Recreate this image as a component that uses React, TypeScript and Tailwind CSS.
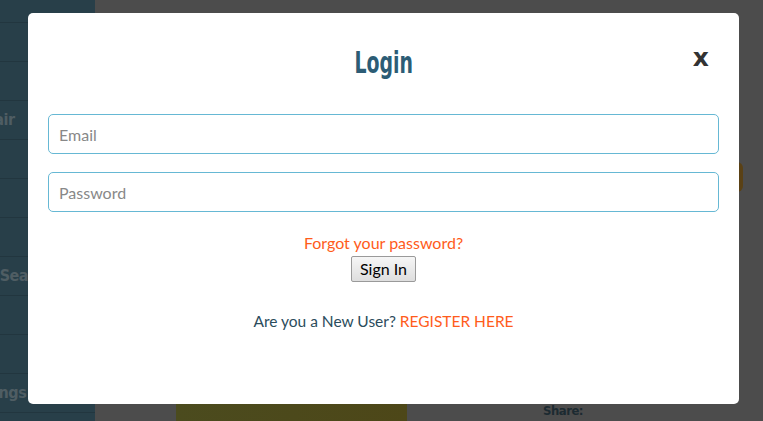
import React from 'react';

const sideItems = [
  { label: '', cls: '' },
  { label: 'Stair', cls: '-ml-[22px]' },
  { label: '', cls: '' },
  { label: '', cls: '' },
  { label: '', cls: '' },
  { label: 'Floor Seat', cls: '-ml-[44px]' },
  { label: '', cls: '' },
  { label: '', cls: '' },
  { label: 'Ratings', cls: '-ml-[32px]' },
  { label: '', cls: '' },
];

export default function App() {
  return (
    <div className="relative h-[421px] w-[763px] overflow-hidden bg-[#4c4c4c] font-['Lato',sans-serif]">
      {/* page behind the overlay */}
      <div className="flex h-full">
        <div className="flex w-[95px] flex-col bg-[#22363f]">
          <div className="h-[22px] shrink-0 bg-[#283f49]" />
          <div className="mt-px h-[38px] shrink-0 bg-[#283f49]" />
          {sideItems.map((item, i) => (
            <div
              key={i}
              className="mt-px flex h-[38px] shrink-0 items-center overflow-visible whitespace-nowrap bg-[#283f49] font-['DejaVu_Sans_Condensed',sans-serif] text-[16px] font-bold tracking-[-0.5px] text-[#4f5d63]"
            >
              <span className={item.cls}>{item.label}</span>
            </div>
          ))}
        </div>
        <div className="relative flex-1">
          <div className="absolute right-[20px] top-[162px] h-[30px] w-[40px] rounded-r-[6px] bg-[#5a4115]" />
          <div className="absolute left-[81px] top-[403px] h-[30px] w-[231px] bg-gradient-to-r from-[#4b4b1e] to-[#4d4718]" />
          <div className="absolute left-[448px] top-[401px] font-['DejaVu_Sans_Condensed',sans-serif] text-[13px] font-bold tracking-[-0.5px] text-[#1c2a31]">
            Share:
          </div>
        </div>
      </div>

      {/* modal */}
      <div className="absolute inset-0 flex items-start justify-start pl-[28px] pt-[13px]">
        <div className="relative h-[391px] w-[711px] rounded-[5px] bg-white px-[20px]">
          <button className="absolute right-[30px] top-[32px] font-['DejaVu_Sans',sans-serif] text-[25px] font-bold leading-none text-[#333]">
            x
          </button>
          <h2 className="pt-[31px] text-center font-['DejaVu_Sans_Condensed',sans-serif] text-[30px] font-bold leading-[38px] text-[#2c5c75]">
            <span className="inline-block scale-x-[0.7]">Login</span>
          </h2>
          <div className="mt-[32px] flex flex-col gap-[18px]">
            <input
              placeholder="Email"
              className="h-[40px] w-full rounded-[5px] border border-[#66b8d4] px-[10px] text-[16px] text-[#333] outline-none placeholder:text-[#888]"
            />
            <input
              type="password"
              placeholder="Password"
              className="h-[40px] w-full rounded-[5px] border border-[#66b8d4] px-[10px] text-[16px] text-[#333] outline-none placeholder:text-[#888]"
            />
          </div>
          <div className="mt-[20px] flex flex-col items-center">
            <a className="text-[16px] leading-[22px] text-[#ff5c1b]">Forgot your password?</a>
            <button className="mt-[2px] h-[26px] rounded-[2px] border border-[#9a9a9a] bg-gradient-to-b from-[#f6f6f6] to-[#dedede] px-[8px] text-[16px] leading-none text-black">
              Sign In
            </button>
            <p className="mt-[28px] text-[15.5px] text-[#2b4c5c]">
              Are you a New User? <a className="text-[#ff5c1b]">REGISTER HERE</a>
            </p>
          </div>
        </div>
      </div>
    </div>
  );
}
